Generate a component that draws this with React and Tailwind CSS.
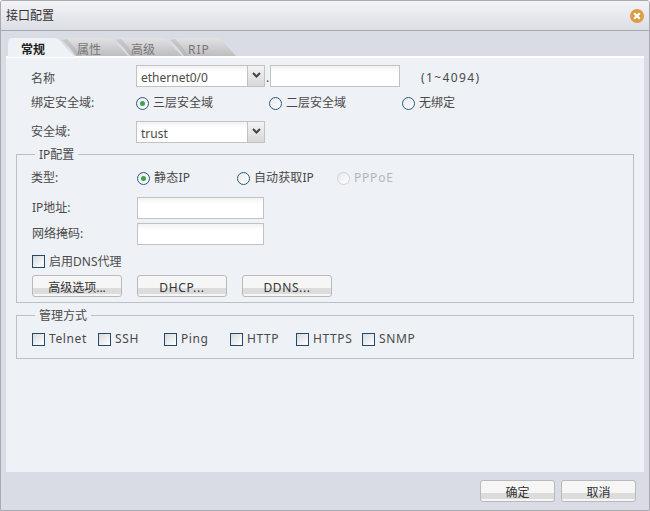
const font = { cn: "font-['Noto_Sans','Noto_Sans_CJK_SC',sans-serif]" };

const Radio = ({ checked, disabled, label, className = "", textClass = "" }) => (
  <label className={`flex items-center gap-[4px] ${className}`}>
    <span
      className={`flex h-[13px] w-[13px] items-center justify-center rounded-full border bg-gradient-to-br from-[#e6e9ee] to-white ${
        disabled ? "border-[#d0d3d8]" : "border-[#2f5878]"
      }`}
    >
      {checked && <span className="h-[5px] w-[5px] rounded-full bg-[#3fa34d]" />}
    </span>
    <span className={`${disabled ? "text-[#b4b7bc]" : ""} ${textClass}`}>{label}</span>
  </label>
);

const Checkbox = ({ label, className = "", textClass = "" }) => (
  <label className={`flex items-center gap-[4px] ${className}`}>
    <span className="h-[13px] w-[13px] border border-[#23486a] bg-gradient-to-br from-[#d8dade] to-white" />
    <span className={textClass}>{label}</span>
  </label>
);

const Select = ({ value }) => (
  <div className="flex h-[22px] w-[129px] border border-[#c2c2c2] bg-gradient-to-b from-[#f2f2f2] to-white to-30%">
    <span className="flex-1 pl-[4px] leading-[24px]">{value}</span>
    <span className="flex w-[17px] items-start justify-center border-l border-[#c2c2c2] bg-gradient-to-b from-[#f4f4f4] to-[#d8d8d8] pt-[6px]">
      <svg width="9" height="6" viewBox="0 0 9 6">
        <path d="M1 1l3.5 3.5L8 1" fill="none" stroke="#444" strokeWidth="2" />
      </svg>
    </span>
  </div>
);

const TextBox = ({ className = "" }) => (
  <div className={`h-[22px] border border-[#c2c2c2] bg-gradient-to-b from-[#f2f2f2] to-white to-30% ${className}`} />
);

const Button = ({ children, className = "w-[90px]" }) => (
  <button className={`h-[22px] rounded-[3px] border border-[#b9b9b9] bg-[linear-gradient(#f6f6f6_0,#f6f6f6_60%,#dcdcdc_60%,#dcdcdc_90%,#f6f6f6_90%)] pt-[2px] text-center leading-[20px] text-[#333] ${className}`}>
    {children}
  </button>
);

const Tab = ({ label, active, textClass }) => (
  <div className={`relative h-[19px] w-[54px] ${active ? "z-10" : ""}`}>
    <svg className="absolute left-0 top-0 overflow-visible" width="68" height="20" viewBox="0 0 68 20">
      {active ? (
        <path d="M0 20V6Q0 1 5 1H46Q51 1 54 6L67 20Z" fill="#eef1f6" />
      ) : (
        <>
          <defs>
            <linearGradient id="tabfill" x1="0" y1="0" x2="0" y2="1">
              <stop offset="0" stopColor="#e2e2e4" />
              <stop offset="1" stopColor="#bdbdc0" />
            </linearGradient>
          </defs>
          <path d="M0 3Q4 1 8 1H46Q51 1 54 6L66 19H14Q8 10 0 3Z" fill="url(#tabfill)" />
          <path d="M0 3Q8 10 14 19H19Q12 9 5 2Z" fill="#a9a9ac" opacity="0.4" />
        </>
      )}
    </svg>
    <span className={`absolute top-0 leading-[26px] ${textClass}`}>{label}</span>
  </div>
);

const Legend = ({ children }) => (
  <legend className="ml-[18px] px-[4px] leading-[16px]">
    <span className="inline-block translate-y-[1px]">{children}</span>
  </legend>
);

export default function App() {
  return (
    <div className={`flex h-[511px] w-[650px] flex-col overflow-hidden rounded-t-[3px] border border-[#a9aaae] bg-[#d9dce4] text-[12px] text-[#4a4a4a] ${font.cn}`}>
      {/* title bar */}
      <div className="flex h-[30px] shrink-0 items-center justify-between border-b border-[#a9aaae] bg-gradient-to-b from-[#f3f4f7] to-[#dcdee6] pl-[5px] pr-[5px]">
        <span className="text-[#333]">接口配置</span>
        <svg width="14" height="14" viewBox="0 0 14 14">
          <circle cx="7" cy="7" r="7" fill="#dd9c44" />
          <path d="M4.2 4.2l5.6 5.6M9.8 4.2l-5.6 5.6" stroke="#fff" strokeWidth="2.2" />
        </svg>
      </div>

      {/* tabs */}
      <div className="flex h-[25px] shrink-0 items-end pl-[7px]">
        <Tab label="常规" active textClass="left-[13px] font-bold text-[#222]" />
        <Tab label="属性" textClass="left-[15px] text-[#777]" />
        <Tab label="高级" textClass="left-[15px] text-[#777]" />
        <Tab label="RIP" textClass="left-[18px] tracking-[1px] text-[#777]" />
      </div>

      {/* panel */}
      <div className="ml-[5px] mr-[5px] flex-1 border-t-2 border-white bg-[#eef1f6] px-[10px]">
        <div className="ml-[15px] mt-[7px] flex h-[22px] items-center">
          <span className="w-[105px] pt-[5px]">名称</span>
          <Select value="ethernet0/0" />
          <span className="w-[5px] pt-[4px] text-center">.</span>
          <TextBox className="w-[130px]" />
          <span className="ml-[21px] pt-[4px] tracking-[1.4px]">(1~4094)</span>
        </div>
        <div className="ml-[15px] mt-[5px] flex h-[22px] items-center">
          <span className="w-[105px]">绑定安全域:</span>
          <Radio checked label="三层安全域" className="w-[133px]" />
          <Radio label="二层安全域" className="w-[133px]" />
          <Radio label="无绑定" />
        </div>
        <div className="ml-[15px] mt-[7px] flex h-[22px] items-center">
          <span className="w-[105px]">安全域:</span>
          <Select value="trust" />
        </div>

        <fieldset className="mt-[3px] h-[157px] border border-[#bcbfc4]">
          <Legend>IP配置</Legend>
          <div className="ml-[14px] mt-[5px] flex h-[22px] items-center">
            <span className="w-[106px]">类型:</span>
            <Radio checked label="静态IP" className="w-[100px]" textClass="tracking-[0.2px]" />
            <Radio label="自动获取IP" className="w-[100px]" textClass="tracking-[0.1px]" />
            <Radio disabled label="PPPoE" textClass="tracking-[0.8px]" />
          </div>
          <div className="ml-[15px] mt-[8px] flex h-[22px] items-center">
            <span className="w-[105px]">IP地址:</span>
            <TextBox className="w-[127px]" />
          </div>
          <div className="ml-[15px] mt-[4px] flex h-[22px] items-center">
            <span className="w-[105px]">网络掩码:</span>
            <TextBox className="w-[127px]" />
          </div>
          <Checkbox label="启用DNS代理" className="ml-[15px] mt-[4px] h-[22px] pt-[3px]" />
          <div className="ml-[15px] mt-[4px] flex gap-[15px]">
            <Button>高级选项...</Button>
            <Button className="w-[90px] tracking-[0.7px]">DHCP...</Button>
            <Button className="w-[90px] tracking-[0.6px]">DDNS...</Button>
          </div>
        </fieldset>

        <fieldset className="mt-[4px] h-[52px] border border-[#bcbfc4]">
          <Legend>管理方式</Legend>
          <div className="ml-[15px] mt-[5px] flex h-[22px]">
            {["Telnet", "SSH", "Ping", "HTTP", "HTTPS", "SNMP"].map((name) => (
              <Checkbox key={name} label={name} className="w-[66px] shrink-0" textClass="tracking-[0.6px]" />
            ))}
          </div>
        </fieldset>
      </div>

      {/* footer */}
      <div className="flex h-[38px] shrink-0 items-start justify-end gap-[6px] pr-[13px] pt-[8px]">
        <Button className="w-[75px]">确定</Button>
        <Button className="w-[75px]">取消</Button>
      </div>
    </div>
  );
}
